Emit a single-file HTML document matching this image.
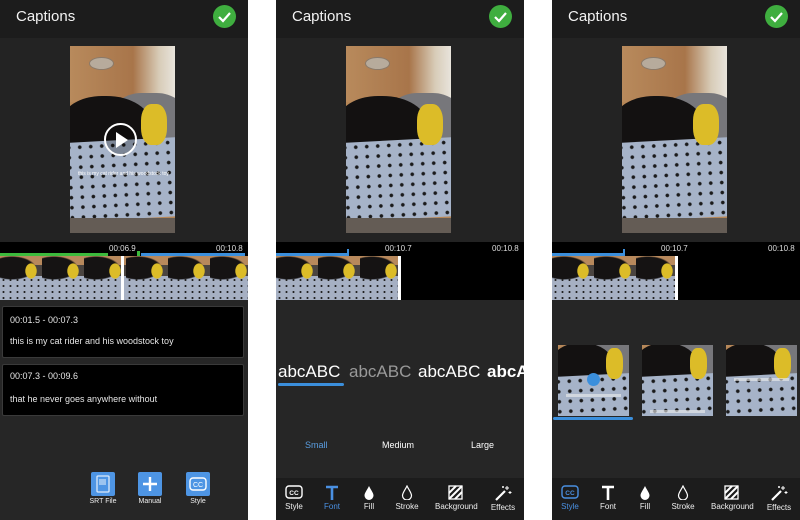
<!DOCTYPE html>
<html><head><meta charset="utf-8"><style>
*{margin:0;padding:0;box-sizing:border-box}
body{width:800px;height:520px;background:#fff;position:relative;overflow:hidden;font-family:"Liberation Sans",sans-serif;color:#fff}
.p{position:absolute;top:0;width:248px;height:520px;background:#262626;overflow:hidden}
.hd{position:absolute;left:0;top:0;width:100%;height:38px;background:#1c1c1c}
.hd span{position:absolute;left:16px;top:8px;font-size:15px;color:#f2f2f2}
.ok{position:absolute;right:12px;top:5px;width:23px;height:23px;border-radius:50%;background:#3fae3f}
.ok svg{position:absolute;left:0;top:0}
.va{position:absolute;top:38px;left:0;width:100%;height:204px;background:#232323}
.v{position:absolute;left:70px;top:8px;width:105px;height:187px;overflow:hidden;background:#b58656}
.v i{position:absolute;display:block}
.fl{left:0;top:0;width:100%;height:30%;background:linear-gradient(90deg,#b88a5c,#a8754a 60%,#d8ccb8 85%,#e8e4dc)}
.bw{left:18%;top:6%;width:24%;height:7%;border-radius:50%;background:#b7ab9c;border:1px solid #8a7a6a}
.gb{left:40%;top:25%;width:70%;height:30%;border-radius:40%;background:#77777b}
.ct{left:-8%;top:27%;width:85%;height:30%;border-radius:45% 50% 30% 30%;background:#131111}
.bl{left:-5%;top:50%;width:110%;height:42%;background-color:#a6b3c8;background-image:radial-gradient(circle,#1a1a1a 22%,transparent 27%);background-size:11px 10px;transform:rotate(-3deg)}
.ty{left:68%;top:31%;width:24%;height:22%;border-radius:40%;background:#dcbc28}
.bt{left:0;top:92%;width:100%;height:8%;background:#645c55}
.tl{position:absolute;top:242px;left:0;width:100%;height:58px;background:#000}
.ts{position:absolute;top:12px;font-size:8px;color:#ddd}
.strip{position:absolute;top:14px;left:0;height:44px;background:
radial-gradient(ellipse 6px 8px at 31px 15px,#dcbc28 90%,transparent 100%),
radial-gradient(ellipse 24px 12px at 12px 12px,#151313 90%,transparent 100%),
linear-gradient(#b8895c 0,#b8895c 20%,#4a4440 20%,#4a4440 46%,#a6b0c3 46%,#a6b0c3 100%);
background-size:42px 44px;background-repeat:repeat-x}
.dots{position:absolute;left:0;top:21px;height:23px;background-image:radial-gradient(circle,#222 20%,transparent 25%);background-size:7px 6px}
.wl{position:absolute;top:14px;width:3px;height:44px;background:#fff}
.box{position:absolute;left:2px;width:242px;height:52px;background:#000;border:1px solid #3a3a3a;border-radius:2px;font-size:9px;color:#e6e6e6}
.box div{position:absolute;left:7px}
.bb{position:absolute;top:472px;width:24px;height:24px;background:#4e95e4;border-radius:2px}
.bl2{position:absolute;top:498px;font-size:7px;color:#eee;width:50px;text-align:center}
.fr{position:absolute;top:362px;font-size:17px;white-space:nowrap}
.sz{position:absolute;top:440px;font-size:9px}
.tb{position:absolute;left:0;top:478px;width:100%;height:42px;background:#1c1c1c}
.tbi{position:absolute;top:0;width:40px;text-align:center}
.tbi svg{display:block;margin:7px auto 0}
.tbi span{display:block;font-size:8px;margin-top:2px;color:#eee}
.st{position:absolute;top:345px;width:71px;height:71px;overflow:hidden}
.st .v{left:0;top:-40px;width:71px;height:140px}
.cap{position:absolute;left:8px;width:55px;height:3px;background:#eee;opacity:.6}
</style></head><body>

<!-- PANEL 1 -->
<div class="p" style="left:0">
 <div class="hd"><span>Captions</span><div class="ok"><svg width="23" height="23"><path d="M6 12l4 4 7-8" stroke="#fff" stroke-width="2.2" fill="none"/></svg></div></div>
 <div class="va"><div class="v"><i class="fl"></i><i class="bw"></i><i class="gb"></i><i class="ct"></i><i class="bl"></i><i class="ty"></i><i class="bt"></i>
  <i style="left:34px;top:77px;width:33px;height:33px;border:2px solid #fff;border-radius:50%;background:rgba(0,0,0,.25)"></i>
  <i style="left:46px;top:86px;width:0;height:0;border-left:12px solid #fff;border-top:8px solid transparent;border-bottom:8px solid transparent"></i>
  <i style="left:8px;top:125px;font-size:5px;color:#fff;font-style:normal;white-space:nowrap">this is my cat rider and his woodstock toy</i>
 </div></div>
 <div class="tl">
  <div style="position:absolute;left:0;top:11px;width:108px;height:3px;background:#3cba3c"></div>
  <div style="position:absolute;left:137px;top:9px;width:3px;height:5px;background:#3cba3c"></div>
  <div style="position:absolute;left:141px;top:11px;width:104px;height:3px;background:#3b8fdc"></div>
  <div class="ts" style="left:109px;top:2px">00:06.9</div>
  <div class="ts" style="left:216px;top:2px">00:10.8</div>
  <div class="strip" style="width:248px"></div><div class="dots" style="width:248px;top:35px"></div>
  <div class="wl" style="left:121px"></div>
 </div>
 <div class="box" style="top:306px"><div style="top:8px">00:01.5 - 00:07.3</div><div style="top:29px">this is my cat rider and his woodstock toy</div></div>
 <div class="box" style="top:364px"><div style="top:6px">00:07.3 - 00:09.6</div><div style="top:29px">that he never goes anywhere without</div></div>
 <div class="bb" style="left:91px"><svg width="24" height="24"><rect x="6" y="4" width="12" height="16" rx="1" fill="none" stroke="#dbe9fa" stroke-width="1.3"/><rect x="8" y="7" width="7" height="6" fill="#9cc4ef"/></svg></div>
 <div class="bb" style="left:138px"><svg width="24" height="24"><path d="M12 5v14M5 12h14" stroke="#fff" stroke-width="2.4"/></svg></div>
 <div class="bb" style="left:186px"><svg width="24" height="24"><rect x="4" y="6" width="16" height="12" rx="3" fill="none" stroke="#fff" stroke-width="1.4"/><text x="12" y="15" font-size="7" fill="#fff" text-anchor="middle" font-family="Liberation Sans">CC</text></svg></div>
 <div class="bl2" style="left:78px">SRT File</div>
 <div class="bl2" style="left:125px">Manual</div>
 <div class="bl2" style="left:173px">Style</div>
</div>

<!-- PANEL 2 -->
<div class="p" style="left:276px">
 <div class="hd"><span>Captions</span><div class="ok"><svg width="23" height="23"><path d="M6 12l4 4 7-8" stroke="#fff" stroke-width="2.2" fill="none"/></svg></div></div>
 <div class="va"><div class="v"><i class="fl"></i><i class="bw"></i><i class="gb"></i><i class="ct"></i><i class="bl"></i><i class="ty"></i><i class="bt"></i></div></div>
 <div class="tl">
  <div style="position:absolute;left:0;top:11px;width:73px;height:3px;background:#3b8fdc"></div>
  <div style="position:absolute;left:71px;top:7px;width:2px;height:7px;background:#3b8fdc"></div>
  <div class="ts" style="left:109px;top:2px">00:10.7</div>
  <div class="ts" style="left:216px;top:2px">00:10.8</div>
  <div class="strip" style="width:124px"></div><div class="dots" style="width:124px;top:35px"></div>
  <div class="wl" style="left:122px"></div>
 </div>
 <div class="fr" style="left:2px">abcABC</div>
 <div class="fr" style="left:73px;color:#999">abcABC</div>
 <div class="fr" style="left:142px">abcABC</div>
 <div class="fr" style="left:211px;font-weight:bold">abcABC</div>
 <div style="position:absolute;left:2px;top:383px;width:66px;height:3px;background:#3b8fdc;border-radius:2px"></div>
 <div class="sz" style="left:29px;color:#5a9de0">Small</div>
 <div class="sz" style="left:106px">Medium</div>
 <div class="sz" style="left:195px">Large</div>
 <div class="tb">
  <div class="tbi" style="left:-2px"><svg width="18" height="15"><rect x="1" y="1" width="16" height="12" rx="3" fill="none" stroke="#fff" stroke-width="1.4"/><text x="9" y="10" font-size="6.5" fill="#fff" text-anchor="middle" font-family="Liberation Sans" font-weight="bold">CC</text></svg><span>Style</span></div>
  <div class="tbi" style="left:36px"><svg width="16" height="15"><path d="M2 2h12M8 2v13" stroke="#4a90e2" stroke-width="2.6"/></svg><span style="color:#4a90e2">Font</span></div>
  <div class="tbi" style="left:73px"><svg width="12" height="15"><path d="M6 1C4 5 1.5 8 1.5 10.5a4.5 4.5 0 009 0C10.5 8 8 5 6 1z" fill="#fff"/></svg><span>Fill</span></div>
  <div class="tbi" style="left:111px"><svg width="12" height="15"><path d="M6 1C4 5 1.5 8 1.5 10.5a4.5 4.5 0 009 0C10.5 8 8 5 6 1z" fill="none" stroke="#fff" stroke-width="1.2"/></svg><span>Stroke</span></div>
  <div class="tbi" style="left:159px"><svg width="15" height="15"><rect x="1" y="1" width="13" height="13" fill="none" stroke="#fff" stroke-width="1.3"/><path d="M1 8l7-7M1 14L14 1M7 14l7-7" stroke="#fff" stroke-width="2"/></svg><span>Background</span></div>
  <div class="tbi" style="left:207px"><svg width="18" height="16"><path d="M2 15L11 6" stroke="#fff" stroke-width="2.2"/><path d="M13 1v4M11 3h4M16 6v3M14.5 7.5h3M9 1v2M8 2h2" stroke="#fff" stroke-width="1"/></svg><span>Effects</span></div>
 </div>
</div>

<!-- PANEL 3 -->
<div class="p" style="left:552px">
 <div class="hd"><span>Captions</span><div class="ok"><svg width="23" height="23"><path d="M6 12l4 4 7-8" stroke="#fff" stroke-width="2.2" fill="none"/></svg></div></div>
 <div class="va"><div class="v"><i class="fl"></i><i class="bw"></i><i class="gb"></i><i class="ct"></i><i class="bl"></i><i class="ty"></i><i class="bt"></i></div></div>
 <div class="tl">
  <div style="position:absolute;left:0;top:11px;width:73px;height:3px;background:#3b8fdc"></div>
  <div style="position:absolute;left:71px;top:7px;width:2px;height:7px;background:#3b8fdc"></div>
  <div class="ts" style="left:109px;top:2px">00:10.7</div>
  <div class="ts" style="left:216px;top:2px">00:10.8</div>
  <div class="strip" style="width:124px"></div><div class="dots" style="width:124px;top:35px"></div>
  <div class="wl" style="left:123px"></div>
 </div>
 <div class="st" style="left:6px"><div class="v"><i class="fl"></i><i class="gb"></i><i class="ct"></i><i class="bl"></i><i class="ty"></i><i class="bt"></i></div><div class="cap" style="top:49px"></div>
  <div style="position:absolute;left:29px;top:28px;width:13px;height:13px;border-radius:50%;background:#3b8fdc"></div></div>
 <div class="st" style="left:90px"><div class="v"><i class="fl"></i><i class="gb"></i><i class="ct"></i><i class="bl"></i><i class="ty"></i><i class="bt"></i></div><div class="cap" style="top:65px"></div></div>
 <div class="st" style="left:174px"><div class="v"><i class="fl"></i><i class="gb"></i><i class="ct"></i><i class="bl"></i><i class="ty"></i><i class="bt"></i></div><div class="cap" style="top:33px"></div></div>
 <div style="position:absolute;left:1px;top:417px;width:80px;height:3px;background:#3b8fdc;border-radius:2px"></div>
 <div class="tb">
  <div class="tbi" style="left:-2px"><svg width="18" height="15"><rect x="1" y="1" width="16" height="12" rx="3" fill="none" stroke="#4a90e2" stroke-width="1.4"/><text x="9" y="10" font-size="6.5" fill="#4a90e2" text-anchor="middle" font-family="Liberation Sans" font-weight="bold">CC</text></svg><span style="color:#4a90e2">Style</span></div>
  <div class="tbi" style="left:36px"><svg width="16" height="15"><path d="M2 2h12M8 2v13" stroke="#fff" stroke-width="2.6"/></svg><span>Font</span></div>
  <div class="tbi" style="left:73px"><svg width="12" height="15"><path d="M6 1C4 5 1.5 8 1.5 10.5a4.5 4.5 0 009 0C10.5 8 8 5 6 1z" fill="#fff"/></svg><span>Fill</span></div>
  <div class="tbi" style="left:111px"><svg width="12" height="15"><path d="M6 1C4 5 1.5 8 1.5 10.5a4.5 4.5 0 009 0C10.5 8 8 5 6 1z" fill="none" stroke="#fff" stroke-width="1.2"/></svg><span>Stroke</span></div>
  <div class="tbi" style="left:159px"><svg width="15" height="15"><rect x="1" y="1" width="13" height="13" fill="none" stroke="#fff" stroke-width="1.3"/><path d="M1 8l7-7M1 14L14 1M7 14l7-7" stroke="#fff" stroke-width="2"/></svg><span>Background</span></div>
  <div class="tbi" style="left:207px"><svg width="18" height="16"><path d="M2 15L11 6" stroke="#fff" stroke-width="2.2"/><path d="M13 1v4M11 3h4M16 6v3M14.5 7.5h3M9 1v2M8 2h2" stroke="#fff" stroke-width="1"/></svg><span>Effects</span></div>
 </div>
</div>
</body></html>
